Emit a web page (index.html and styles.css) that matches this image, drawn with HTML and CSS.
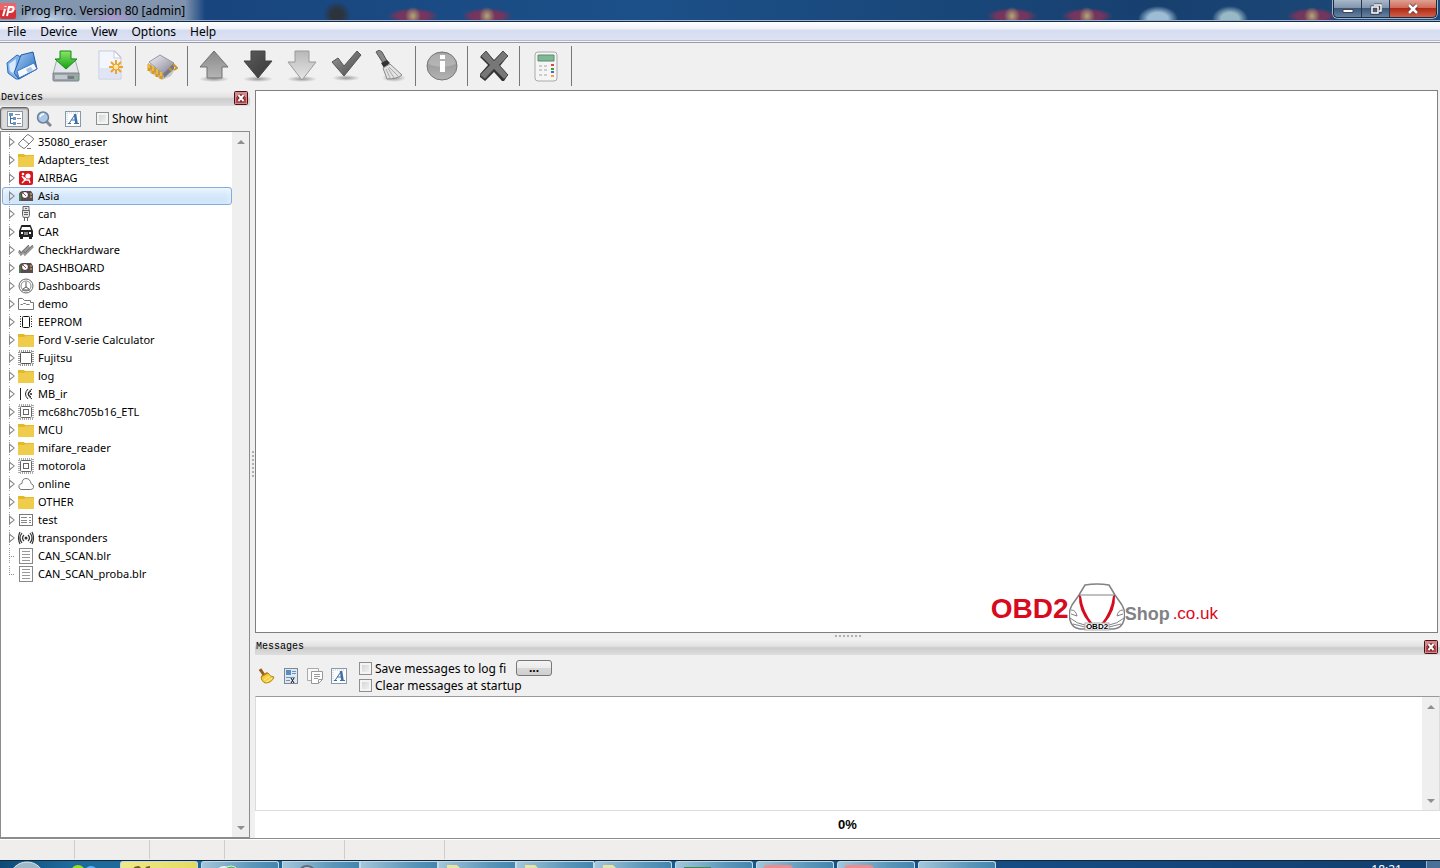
FILE: index.html
```html
<!DOCTYPE html>
<html lang="en">
<head>
    <meta charset="utf-8">
    <title>iProg Pro. Version 80 [admin]</title>
    <link rel="stylesheet" href="styles.css">
</head>
<body>
    <!-- shared icons -->
    <svg class="sprite" aria-hidden="true">
        <defs>
            <linearGradient id="gBlue" x1="0" y1="0" x2="1" y2="1"><stop offset="0" stop-color="#a8d2f8"/><stop offset="1" stop-color="#1a5fb8"/></linearGradient>
            <linearGradient id="gGray" x1="0" y1="0" x2="0" y2="1"><stop offset="0" stop-color="#8a8a8a"/><stop offset="1" stop-color="#b4b4b4"/></linearGradient>
            <linearGradient id="gDark" x1="0" y1="0" x2="1" y2="1"><stop offset="0" stop-color="#5c5c5c"/><stop offset="1" stop-color="#383838"/></linearGradient>
            <linearGradient id="gCheck" x1="0" y1="0" x2="1" y2="1"><stop offset="0" stop-color="#999"/><stop offset="1" stop-color="#4a4a4a"/></linearGradient>
            <linearGradient id="gLight" x1="0" y1="0" x2="0" y2="1"><stop offset="0" stop-color="#b8b8b8"/><stop offset="1" stop-color="#e6e6e6"/></linearGradient>
            <linearGradient id="gGreen" x1="0" y1="0" x2="0" y2="1"><stop offset="0" stop-color="#8be66a"/><stop offset="1" stop-color="#12a012"/></linearGradient>
            <linearGradient id="gMetal" x1="0" y1="0" x2="1" y2="1"><stop offset="0" stop-color="#f4f4fa"/><stop offset="1" stop-color="#80808f"/></linearGradient>
            <radialGradient id="gShadow"><stop offset="0" stop-color="#999"/><stop offset="1" stop-color="#999" stop-opacity="0"/></radialGradient>
        </defs>
        <symbol id="i-folder" viewBox="0 0 16 16"><path d="M0 2h6l1 1h9v12H0z" fill="#e3b92c"/><path d="M0 5h6l2-1h8v11H0z" fill="#efcc4b"/></symbol>
        <symbol id="i-eraser" viewBox="0 0 16 16"><path d="m1 9 8-8q1-1 2 0l4 3q1 1 0 2l-8 8q-1 1-2 0l-4-3q-1-1 0-2zM5 5l6 5M9 14.500h4" fill="#fff" stroke="#777"/></symbol>
        <symbol id="i-airbag" viewBox="0 0 16 16"><rect x="1" y="1" width="14" height="14" rx="2" fill="#d8161c"/><circle cx="10" cy="6" r="2.6" fill="#fff"/><circle cx="5" cy="4" r="1.3" fill="#fff"/><path d="m4 6 3 4-3 3M7 10l4 0 1 3M5 7l3 2" fill="none" stroke="#fff" stroke-width="1.4"/></symbol>
        <symbol id="i-dash" viewBox="0 0 16 16"><path d="M1 13V6q1-3 4-3h8l2 3v7z" fill="#5a4b50"/><path d="M1 13V7l2-2v8z" fill="#4a7a4c"/><circle cx="7" cy="7" r="3.5" fill="#fff" stroke="#333"/><path d="m5 5 3 3" stroke="#c33"/><path d="M12 6h2M12 9h2" stroke="#e6c44b"/></symbol>
        <symbol id="i-plug" viewBox="0 0 16 16"><path d="M5 .5h6v4H5zM4.500 4.500h7v5l-1 2h-5l-1-2zM6.500 12v3M9.500 12v3M6 6.500h4M6 8.500h4M7 2.500h2" fill="#e4e4e4" stroke="#666"/></symbol>
        <symbol id="i-car" viewBox="0 0 16 16"><path d="M1 7 3 2q0-1 1-1h8q1 0 1 1l2 5v6h-1v2h-3v-2H5v2H2v-2H1z" fill="#222"/><path d="m4 3-1 3h10l-1-3zM3 8h2v2H3zM11 8h2v2h-2z" fill="#fff"/><path d="M6 8h4v3H6z" fill="#888"/></symbol>
        <symbol id="i-checks" viewBox="0 0 16 16"><path d="m1 9 2 3 8-8M5 9l2 3 8-8" fill="none" stroke="#999" stroke-width="3"/><path d="m1 8 2 3 8-8M5 8l2 3 8-8" fill="none" stroke="#777"/></symbol>
        <symbol id="i-gauge" viewBox="0 0 16 16"><circle cx="8" cy="8" r="7" fill="#fff" stroke="#666"/><circle cx="8" cy="8" r="5" fill="none" stroke="#888"/><path d="M8 4v5l-3 2M8 9l3 2M4 12h8" fill="none" stroke="#555"/></symbol>
        <symbol id="i-open" viewBox="0 0 16 16"><path d="M.5 13.500v-11h4l2 2h6v2h3v7zM2.500 8.500h2l1-1h2l1 1h3" fill="#fff" stroke="#777"/></symbol>
        <symbol id="i-eeprom" viewBox="0 0 16 16"><rect x="4.500" y="2.500" width="7" height="11" rx="1" fill="#fff" stroke="#111"/><path d="M2.500 2v12M13.500 2v12" stroke="#111" stroke-dasharray="1 1.500"/></symbol>
        <symbol id="i-chip" viewBox="0 0 16 16"><rect x="1" y="1" width="14" height="14" fill="none" stroke="#999" stroke-width="2" stroke-dasharray="1 1"/><rect x="2.500" y="2.500" width="11" height="11" rx="1" fill="#fff" stroke="#555"/></symbol>
        <symbol id="i-cpu" viewBox="0 0 16 16"><rect x="1" y="1" width="14" height="14" fill="none" stroke="#aaa" stroke-width="2" stroke-dasharray="1 1"/><rect x="2.500" y="2.500" width="11" height="11" rx="1" fill="#fff" stroke="#666"/><rect x="5.500" y="5.500" width="5" height="5" fill="#fff" stroke="#666"/></symbol>
        <symbol id="i-ir" viewBox="0 0 16 16"><path d="M2.500 2v12M14 3q-8 5 0 10M13 5q-5 3 0 6M10 3q-5 5 0 10" fill="none" stroke="#222"/><circle cx="13" cy="8" r="1" fill="#222"/></symbol>
        <symbol id="i-cloud" viewBox="0 0 16 16"><path d="M3 13.500q-3-1-2-4 1-2 3-2 0-5 4-5t5 5q3 1 2.500 4-.5 2-3 2z" fill="#fff" stroke="#777"/></symbol>
        <symbol id="i-test" viewBox="0 0 16 16"><rect x="1.500" y="2.500" width="13" height="11" fill="#fff" stroke="#777"/><path d="M3 5.500h6M3 8.500h6M3 10.500h6M11 5.500h2M11 8.500h2M11 10.500h2" stroke="#888"/></symbol>
        <symbol id="i-radio" viewBox="0 0 16 16"><circle cx="8" cy="8" r="1.500" fill="#333"/><path d="M6 5q-3 3 0 6M10 5q3 3 0 6M4 3q-4 5 0 10M12 3q4 5 0 10M2 2q-3 6 0 12M14 2q3 6 0 12" fill="none" stroke="#333" stroke-width="1.200"/></symbol>
        <symbol id="i-doc" viewBox="0 0 16 16"><rect x="1.500" y=".5" width="13" height="15" fill="#fff" stroke="#888"/><path d="M4 3.500h8M4 6.500h8M4 9.500h8M4 12.500h8" stroke="#999"/></symbol>
        <symbol id="i-font" viewBox="0 0 16 16"><rect x=".5" y=".5" width="15" height="15" fill="#fff" stroke="#8a98a8"/><path d="M2 2v12M2 2h12" stroke="#bcd" stroke-dasharray="1 1"/><path d="m4 12.500 6-9M6.500 9H11M3 12.500h3M9 12.500h5" fill="none" stroke="#3c6ea8"/><path d="m10 3 1.500 9.500" stroke="#3c6ea8" stroke-width="2.500"/></symbol>
        <symbol id="i-x" viewBox="0 0 14 14"><rect x=".5" y=".5" width="13" height="13" rx="1" fill="#d58a8c" stroke="#4a1216"/><path d="M2 6h10v6H2z" fill="#b0484e"/><path d="m4.500 4 5 6M9.500 4l-5 6" stroke="#6a1c20" stroke-width="4"/><path d="m4.500 4 5 6M9.500 4l-5 6" stroke="#fff" stroke-width="2"/></symbol>
    </svg>

    <header class="titlebar">
        <svg class="app-icon" viewBox="0 0 16 16"><rect width="16" height="16" rx="2" fill="#d62f35"/><path d="M0 0h16v7H0z" fill="#e8666a"/><path d="M3 13 5 6M5.500 4V3M7 13 9 4h3q2 0 1.500 2.500T10 9H8" fill="none" stroke="#fff" stroke-width="2"/></svg>
        <h1>iProg Pro. Version 80 [admin]</h1>
        <div class="window-buttons">
            <button type="button" aria-label="Minimize"><svg viewBox="0 0 12 12"><path d="M1 6.500h10v3H1z" fill="#fff" stroke="#445"/></svg></button>
            <button type="button" aria-label="Restore"><svg viewBox="0 0 12 12"><path d="M4 2h7v7H9M2 4h6v7H2z" fill="none" stroke="#445" stroke-width="3"/><path d="M4 2h7v6H9M2 4h6v6H2z" fill="none" stroke="#fff" stroke-width="1.500"/></svg></button>
            <button type="button" class="close" aria-label="Close"><svg viewBox="0 0 12 12"><path d="m2 2 8 8M10 2l-8 8" stroke="#633" stroke-width="4"/><path d="m2 2 8 8M10 2l-8 8" stroke="#fff" stroke-width="2.500"/></svg></button>
        </div>
    </header>

    <nav class="menubar">
        <button type="button">File</button>
        <button type="button">Device</button>
        <button type="button">View</button>
        <button type="button">Options</button>
        <button type="button">Help</button>
    </nav>

    <div class="toolbar">
        <button type="button" aria-label="Open"><svg viewBox="0 0 32 32"><path d="m1 13 10-8 6 3-4 21-3 0-8-6z" fill="#7fb4ea" stroke="#2c6cb8"/><path d="m3 14 7-5-1 16-5-4z" fill="#d8eafc"/><path d="m15 5 12-3 4 17-18 10-5-6z" fill="url(#gBlue)" stroke="#2058a8"/><path d="m11 21 17-8 3 6-18 9z" fill="#f5f9ff" stroke="#3a78c4"/><path d="m20 19 5-2 2 3-5 3z" fill="#a9c4e4"/></svg></button>
        <button type="button" aria-label="Save"><svg viewBox="0 0 32 32"><path d="M7 9h18l4 15H3z" fill="#e4e7ea" stroke="#a5a9ae"/><path d="M3 23h26v7q0 1-1 1H4q-1 0-1-1z" fill="#9aa3aa" stroke="#7d848a"/><path d="M5 25h12v4H5z" fill="#c2cad0"/><path d="M19 26v3M21 26v3M23 26v3" stroke="#555"/><circle cx="26" cy="28" r="1" fill="#4e4"/><path d="M10 1h11v8h6L16 19 5 9h5z" fill="url(#gGreen)" stroke="#158a18"/></svg></button>
        <button type="button" aria-label="New"><svg viewBox="0 0 32 32"><path d="M5 1h16l6 6v22H5z" fill="#f3f6fc" stroke="#c5cbdc"/><path d="M6 18h20v10H6z" fill="#dfe5f4"/><path d="M20 1v7h7z" fill="#fff" stroke="#c5cbdc"/><path d="M22 10v14M15 17h14M17 12l10 10M27 12 17 22" stroke="#f0a32a" stroke-width="2"/><circle cx="22" cy="17" r="3" fill="#ffe9a8" stroke="#eaa030"/></svg></button>
        <span class="sep"></span>
        <button type="button" aria-label="Chip"><svg viewBox="0 0 32 32"><path d="m3 17 12 9 14-7-4 7-9 4-13-8z" fill="#c7c7c7"/><path d="m3 12 11-7 14 8-11 11z" fill="url(#gMetal)" stroke="#9797a7"/><path d="m17 24 11-11v6l-10 9z" fill="#77778a"/><path d="m2 13 15 10v5L2 18z" fill="#a89c90"/><path d="M3 14v7M7 16v8M11 19v8M15 22v7" stroke="#dc9a14" stroke-width="3"/><path d="M3 14v4M7 16v5M11 19v5M15 22v4" stroke="#ffd766" stroke-width="1"/><path d="m27 14 4 4-3 2M23 18l3 3" fill="none" stroke="#c8932c" stroke-width="2"/></svg></button>
        <span class="sep"></span>
        <button type="button" aria-label="Read"><svg viewBox="0 0 32 32"><ellipse cx="16" cy="29" rx="15" ry="3" fill="url(#gShadow)"/><path d="m16 1 14 16h-6v11H9V17H2z" fill="url(#gGray)" stroke="#707070"/></svg></button>
        <button type="button" aria-label="Write"><svg viewBox="0 0 32 32"><ellipse cx="16" cy="29" rx="15" ry="3" fill="url(#gShadow)"/><path d="M9 1h14v10h7L16 28 2 11h7z" fill="url(#gDark)" stroke="#444"/></svg></button>
        <button type="button" aria-label="Program"><svg viewBox="0 0 32 32"><ellipse cx="16" cy="29" rx="15" ry="3" fill="url(#gShadow)"/><path d="M9 1h14v11h7L16 30 2 12h7z" fill="url(#gLight)" stroke="#9a9a9a"/></svg></button>
        <button type="button" aria-label="Verify"><svg viewBox="0 0 32 32"><ellipse cx="16" cy="28" rx="14" ry="3" fill="url(#gShadow)"/><path d="m2 12 6-4 6 8L27 1l4 4-17 21z" fill="url(#gCheck)" stroke="#555"/></svg></button>
        <button type="button" aria-label="Erase"><svg viewBox="0 0 32 32"><ellipse cx="20" cy="28" rx="12" ry="4" fill="url(#gShadow)"/><path d="m2 2 3-2 3 2 5 9-4 2z" fill="#888" stroke="#555"/><path d="m7 13 6-3 3 3-6 5z" fill="#333"/><path d="m9 18 7-4 12 11q-5 4-15 4z" fill="#e2e2e2" stroke="#888"/><path d="m12 19 4 9M14 18l6 10M15 17l9 9" stroke="#aaa"/></svg></button>
        <span class="sep"></span>
        <button type="button" aria-label="Information"><svg viewBox="0 0 32 32"><ellipse cx="16" cy="16" rx="15" ry="14" fill="url(#gGray)" stroke="#777"/><path d="M2 14q2-11 14-11t14 11q-14 6-28 0" fill="#ccc" fill-opacity=".5"/><path d="M14 5h5v4h-5zM14 11h5v11h-5z" fill="#fff"/></svg></button>
        <span class="sep"></span>
        <button type="button" aria-label="Stop"><svg viewBox="0 0 32 32"><path d="m2 7 6-6 8 9 9-9 5 5-8 10 8 9-4 6h-2l-8-9-9 9-5-4v-3l8-9-8-8z" fill="#333"/><path d="m3 6 5-5 8 10 9-10 5 5-9 9 9 10-4 4-10-10-9 10-5-4 10-10z" fill="#777" stroke="#4d4d4d"/></svg></button>
        <span class="sep"></span>
        <button type="button" aria-label="Calculator"><svg viewBox="0 0 32 32"><rect x="5" y="2" width="22" height="29" rx="3" fill="#f5f5f5" stroke="#aaa"/><path d="M8 5h16v6H8z" fill="#7fb897" stroke="#5a8c70"/><path d="M9 15h3v2H9zM14 15h3v2h-3zM9 19h3v2H9zM14 19h3v2h-3zM9 24h3v2H9zM14 24h3v2h-3z" fill="#ccc"/><path d="M21 14h3v2h-3z" fill="#d44"/><path d="M21 18h3v2h-3z" fill="#3a3"/><path d="M21 21h3v2h-3z" fill="#46c"/><path d="M21 25h3v2h-3z" fill="#ea3"/></svg></button>
        <span class="sep"></span>
    </div>

    <main class="workspace">
        <section class="devices">
            <div class="panel-head">
                <h2>Devices</h2>
                <button type="button" aria-label="Close devices"><svg><use href="#i-x"/></svg></button>
            </div>
            <div class="device-tools">
                <button type="button" class="pressed" aria-label="Tree view"><svg viewBox="0 0 16 16"><rect x=".5" y=".5" width="15" height="15" fill="#fff" stroke="#8a98a8"/><path d="M3.500 3v9.500H7M3.500 7.500H7" fill="none" stroke="#3c6ea8"/><path d="M2 2h4v3H2zM6 6h3v3H6zM6 11h3v3H6z" fill="#6c94bc"/><path d="M8 3.500h5M10 7.500h4M10 12.500h4" stroke="#88a"/></svg></button>
                <button type="button" aria-label="Find"><svg viewBox="0 0 16 16"><path d="m10 10 5 5" stroke="#888" stroke-width="3"/><circle cx="7" cy="6.500" r="5.500" fill="#a9c8ea" stroke="#6d8198" stroke-width="1.500"/><path d="M4 6q1-3 4-3" fill="none" stroke="#fff" stroke-width="1.500"/></svg></button>
                <button type="button" aria-label="Font"><svg><use href="#i-font"/></svg></button>
                <label><input type="checkbox"> Show hint</label>
            </div>
            <div class="tree-box">
                <ul class="tree">
                    <li><button type="button"><svg><use href="#i-eraser"/></svg>35080_eraser</button></li>
                    <li><button type="button"><svg><use href="#i-folder"/></svg>Adapters_test</button></li>
                    <li><button type="button"><svg><use href="#i-airbag"/></svg>AIRBAG</button></li>
                    <li class="selected"><button type="button"><svg><use href="#i-dash"/></svg>Asia</button></li>
                    <li><button type="button"><svg><use href="#i-plug"/></svg>can</button></li>
                    <li><button type="button"><svg><use href="#i-car"/></svg>CAR</button></li>
                    <li><button type="button"><svg><use href="#i-checks"/></svg>CheckHardware</button></li>
                    <li><button type="button"><svg><use href="#i-dash"/></svg>DASHBOARD</button></li>
                    <li><button type="button"><svg><use href="#i-gauge"/></svg>Dashboards</button></li>
                    <li><button type="button"><svg><use href="#i-open"/></svg>demo</button></li>
                    <li><button type="button"><svg><use href="#i-eeprom"/></svg>EEPROM</button></li>
                    <li><button type="button"><svg><use href="#i-folder"/></svg>Ford V-serie Calculator</button></li>
                    <li><button type="button"><svg><use href="#i-chip"/></svg>Fujitsu</button></li>
                    <li><button type="button"><svg><use href="#i-folder"/></svg>log</button></li>
                    <li><button type="button"><svg><use href="#i-ir"/></svg>MB_ir</button></li>
                    <li><button type="button"><svg><use href="#i-cpu"/></svg>mc68hc705b16_ETL</button></li>
                    <li><button type="button"><svg><use href="#i-folder"/></svg>MCU</button></li>
                    <li><button type="button"><svg><use href="#i-folder"/></svg>mifare_reader</button></li>
                    <li><button type="button"><svg><use href="#i-cpu"/></svg>motorola</button></li>
                    <li><button type="button"><svg><use href="#i-cloud"/></svg>online</button></li>
                    <li><button type="button"><svg><use href="#i-folder"/></svg>OTHER</button></li>
                    <li><button type="button"><svg><use href="#i-test"/></svg>test</button></li>
                    <li><button type="button"><svg><use href="#i-radio"/></svg>transponders</button></li>
                    <li class="file"><button type="button"><svg><use href="#i-doc"/></svg>CAN_SCAN.blr</button></li>
                    <li class="file"><button type="button"><svg><use href="#i-doc"/></svg>CAN_SCAN_proba.blr</button></li>
                </ul>
                <div class="scrollbar">
                    <button type="button" class="up" aria-label="Scroll up"></button>
                    <button type="button" class="down" aria-label="Scroll down"></button>
                </div>
            </div>
        </section>

        <div class="splitter vertical"></div>

        <div class="right">
            <section class="canvas">
                <div class="logo">
                    <span class="obd">OBD2</span>
                    <svg viewBox="0 0 56 48"><path d="m10 12 6-10q12-2 24 0l6 10 7 10q4 7 2 15-2 8-10 9H11q-8-1-10-9-2-8 2-15z" fill="#fff" stroke="#808285" stroke-width="1.500"/><path d="M10 12h36M1 35q7 6 15 7M55 35q-7 6-15 7M2 27q5 0 6 6l-6-2M54 27q-5 0-6 6l6-2M16 44 4 41M40 44l12-3" fill="none" stroke="#808285"/><path d="M10 12q-1 16 11 29h3Q14 29 12 13zM46 12q1 16-11 29h-3Q42 29 44 13z" fill="#d70a1e"/><rect x="16" y="40" width="24" height="7" fill="#fff" stroke="#aaa"/><text x="28" y="46" text-anchor="middle">OBD2</text></svg>
                    <span class="shop">Shop</span>
                    <span class="uk">.co.uk</span>
                </div>
            </section>
            <div class="splitter horizontal"></div>
            <section class="messages">
                <div class="panel-head">
                    <h2>Messages</h2>
                    <button type="button" aria-label="Close messages"><svg><use href="#i-x"/></svg></button>
                </div>
                <div class="message-tools">
                    <button type="button" aria-label="Clear"><svg viewBox="0 0 16 16"><path d="m1 1 4 6" stroke="#9a5c20" stroke-width="3"/><path d="m2 8 6-4 2 2-7 4z" fill="#b8742a"/><path d="m2 9 7-4q2 4 6 4-2 6-9 6-4-2-4-6" fill="#f5cf35" stroke="#b48818"/><path d="m5 12 6-4M7 14l6-4" stroke="#fff0a0"/></svg></button>
                    <button type="button" aria-label="Save log"><svg viewBox="0 0 16 16"><rect x="1.500" y=".5" width="13" height="15" fill="#dfe8f2" stroke="#7d8894"/><path d="M3 2h5v5H3z" fill="#5b8cc0"/><path d="M9 3.500h4M9 5.500h4M3 9.500h9M3 12.500h4" stroke="#6e93bb"/><path d="m8 10 3 5M11 10l-3 5" stroke="#111"/></svg></button>
                    <button type="button" aria-label="Copy"><svg viewBox="0 0 16 16"><path d="M.5.5h11v12H.5z" fill="#f8f8f8" stroke="#aaa"/><path d="M4.500 3.500h11v8l-4 4h-7z" fill="#fff" stroke="#999"/><path d="M7 6.500h6M7 8.500h6M7 10.500h4M11.500 15v-3.500H15" fill="none" stroke="#999"/></svg></button>
                    <button type="button" aria-label="Font"><svg><use href="#i-font"/></svg></button>
                    <div class="options">
                        <div class="option">
                            <label class="log-label"><input type="checkbox"> Save messages to log fi</label>
                            <button type="button" class="browse">...</button>
                        </div>
                        <div class="option"><label><input type="checkbox"> Clear messages at startup</label></div>
                    </div>
                </div>
                <div class="log-box">
                    <textarea readonly aria-label="Messages"></textarea>
                    <div class="scrollbar">
                        <button type="button" class="up" aria-label="Scroll up"></button>
                        <button type="button" class="down" aria-label="Scroll down"></button>
                    </div>
                </div>
                <div class="progress">0%</div>
            </section>
        </div>
    </main>

    <footer class="statusbar">
        <span></span><span></span><span></span><span class="wide"></span><span class="medium"></span>
    </footer>

    <div class="taskbar">
        <div class="start"><svg viewBox="0 0 120 8"><ellipse cx="27" cy="17" rx="17" ry="16" fill="#9fb8c8" stroke="#dfe9ef"/><circle cx="78" cy="11" r="7" fill="#9fe01c"/><circle cx="91" cy="12" r="7" fill="#5cb4f0"/></svg></div>
        <button type="button" class="task active" aria-label="Files"><svg viewBox="0 0 40 8"><path d="M12 8q0-4 6-4l4 4M24 5l5-1v4" fill="#6d5b22"/></svg></button>
        <button type="button" class="task" aria-label="Browser"><svg viewBox="0 0 40 8"><circle cx="22" cy="12" r="8" fill="#e9f3ee"/><circle cx="29" cy="12" r="8" fill="#5cb85c" stroke="#dff0df"/></svg></button>
        <button type="button" class="task group" aria-label="Search"><svg viewBox="0 0 40 8"><circle cx="24" cy="13" r="9" fill="#b9cfdd" stroke="#667" stroke-width="2"/></svg></button>
        <button type="button" class="task group" aria-label="Window"></button>
        <button type="button" class="task group" aria-label="Folder"><svg viewBox="0 0 40 8"><path d="M8 3h10l3 3h6v2H8z" fill="#e8e4a4"/></svg></button>
        <button type="button" class="task group" aria-label="Folder"><svg viewBox="0 0 40 8"><path d="M8 3h10l3 3h6v2H8z" fill="#e8e4a4"/></svg></button>
        <button type="button" class="task" aria-label="Folder"><svg viewBox="0 0 40 8"><path d="M8 3h10l3 3h6v2H8z" fill="#e8e4a4"/></svg></button>
        <button type="button" class="task" aria-label="Sheet"><svg viewBox="0 0 40 8"><path d="M8 5h27v3H8z" fill="#3c8a4c"/></svg></button>
        <button type="button" class="task" aria-label="Tool"><svg viewBox="0 0 40 8"><path d="M6 8q0-5 5-5h20q5 0 5 5z" fill="#f08c8c"/></svg></button>
        <button type="button" class="task" aria-label="Tool"><svg viewBox="0 0 40 8"><path d="M6 8q0-5 5-5h20q5 0 5 5z" fill="#f08c8c"/></svg></button>
        <button type="button" class="task" aria-label="Window"></button>
        <time class="clock">18:21</time>
        <button type="button" class="show-desktop" aria-label="Show desktop"></button>
    </div>
</body>
</html>
```
FILE: styles.css
```css
* {
    box-sizing: border-box;
}
body {
    margin: 0;
    height: 100vh;
    display: flex;
    flex-direction: column;
    overflow: hidden;
    background-color: #f0f0f0;
    color: #000;
    font-family: "Noto Sans", "Open Sans", sans-serif;
    font-size: 12px;
}
button {
    margin: 0;
    padding: 0;
    border: none;
    background: none;
    color: inherit;
    font: inherit;
}
svg {
    display: block;
    flex: none;
}
h1, h2 {
    margin: 0;
    font-weight: normal;
}
.sprite {
    width: 0;
    height: 0;
    position: absolute;
}

/* title bar */
.titlebar {
    flex: none;
    display: flex;
    align-items: flex-start;
    height: 22px;
    border-bottom: 1px solid #14294a;
    box-shadow: inset 0 -1px #9db4cf;
    background:
        radial-gradient(ellipse 14px 14px at 337px 15px, #2c333c 40%, transparent),
        radial-gradient(ellipse 8px 9px at 413px 16px, #b0a878, transparent),
        radial-gradient(ellipse 26px 8px at 413px 16px, #74355e 60%, transparent),
        radial-gradient(ellipse 8px 9px at 487px 16px, #b0a878, transparent),
        radial-gradient(ellipse 26px 8px at 487px 16px, #74355e 60%, transparent),
        radial-gradient(ellipse 8px 9px at 1012px 16px, #b0a878, transparent),
        radial-gradient(ellipse 26px 8px at 1012px 16px, #74355e 60%, transparent),
        radial-gradient(ellipse 8px 9px at 1087px 16px, #b0a878, transparent),
        radial-gradient(ellipse 26px 8px at 1087px 16px, #74355e 60%, transparent),
        radial-gradient(ellipse 20px 13px at 1158px 19px, #9cbdd4 50%, transparent),
        radial-gradient(ellipse 18px 13px at 1230px 19px, #98b8c6 50%, transparent),
        radial-gradient(ellipse 8px 9px at 1312px 16px, #b0a878, transparent),
        radial-gradient(ellipse 26px 8px at 1312px 16px, #74355e 60%, transparent),
        radial-gradient(ellipse 30px 12px at 112px 20px, #b49cd0, transparent),
        radial-gradient(ellipse 34px 12px at 48px 20px, #c8d8ec, transparent),
        linear-gradient(90deg, #8499b0, #7f93ae 185px, transparent 205px),
        linear-gradient(90deg, #17407a, #1c5088 45%, #17406f 80%, #1d4a7a);
}
.app-icon {
    width: 16px;
    height: 16px;
    margin-top: 3px;
}
.titlebar h1 {
    margin-left: 5px;
    font-size: 12px;
    line-height: 22px;
}
.window-buttons {
    display: flex;
    margin-left: auto;
    margin-right: 3px;
    border: 1px solid #1c2c40;
    border-top: none;
    border-radius: 0 0 5px 5px;
    box-shadow: 0 0 0 1px #9fb2c8;
    overflow: hidden;
}
.window-buttons button {
    display: flex;
    align-items: center;
    justify-content: center;
    width: 28px;
    height: 17px;
    border-right: 1px solid #26384e;
    background: linear-gradient(#a9b8c9, #8095ad 45%, #3d5878 50%, #6683a3);
}
.window-buttons .close {
    width: 46px;
    border-right: none;
    background: linear-gradient(#dfa093, #cf6c5a 45%, #b02a14 50%, #d0604a);
}
.window-buttons svg {
    width: 12px;
    height: 12px;
}

/* menu */
.menubar {
    flex: none;
    display: flex;
    height: 21px;
    padding-left: 7px;
    gap: 14px;
    border-bottom: 1px solid #9a9aa6;
    box-shadow: inset 0 -1px #f5f5f8, inset 0 -2px #b4b8c8;
    background: linear-gradient(#fff, #eef1f8 7px, #d5dcf0 8px, #dfe4f5);
}
.menubar button {
    line-height: 18px;
    height: 19px;
}

/* main toolbar */
.toolbar {
    flex: none;
    display: flex;
    align-items: center;
    height: 47px;
    padding-bottom: 2px;
}
.toolbar button {
    display: flex;
    justify-content: center;
    width: 44px;
}
.toolbar svg {
    width: 32px;
    height: 32px;
}
.sep {
    width: 1px;
    height: 40px;
    margin: 0 4px 0 3px;
    background-color: #777;
}

.workspace {
    flex: 1;
    min-height: 0;
    display: flex;
}
.panel-head {
    flex: none;
    display: flex;
    align-items: center;
    justify-content: space-between;
    height: 16px;
    padding: 0 2px 1px 1px;
    background: linear-gradient(#f2f2f2, #e2e2e2 45%, #cdcdcd 55%, #dedede);
}
.panel-head h2 {
    font-family: "Liberation Mono", monospace;
    font-size: 10px;
    line-height: 14px;
}
.panel-head svg {
    width: 14px;
    height: 14px;
}
label {
    display: flex;
    align-items: center;
    gap: 3px;
    white-space: nowrap;
}
input[type="checkbox"] {
    flex: none;
    appearance: none;
    width: 13px;
    height: 13px;
    margin: 0;
    border: 1px solid #8e8f8f;
    background: linear-gradient(135deg, #cdd0d3, #f6f6f6);
    box-shadow: inset 0 0 0 2px #f4f4f4;
}

/* devices panel */
.devices {
    flex: none;
    display: flex;
    flex-direction: column;
    width: 250px;
}
.device-tools {
    flex: none;
    display: flex;
    align-items: center;
    height: 25px;
}
.device-tools button {
    display: flex;
    align-items: center;
    justify-content: center;
    width: 29px;
    height: 23px;
}
.device-tools .pressed {
    border: 1px solid #666;
    border-radius: 3px;
    background-color: #dcdcdc;
    box-shadow: inset 0 1px 2px #888;
}
.device-tools svg,
.message-tools svg {
    width: 16px;
    height: 16px;
}
.device-tools label {
    margin-left: 9px;
}
.tree-box {
    flex: 1;
    min-height: 0;
    display: flex;
    border: 1px solid #8c8c8c;
    background-color: #fff;
}
.tree {
    flex: 1;
    margin: 0;
    padding: 1px 0 0 1px;
    list-style: none;
    font-size: 11px;
}
.tree li {
    display: flex;
    align-items: center;
    height: 18px;
    padding-left: 6px;
    border: 1px solid transparent;
    border-radius: 3px;
    background: repeating-linear-gradient(#999 0 1px, transparent 1px 2px) 6px 0 / 1px 100% no-repeat;
}
.tree li::before {
    content: "";
    width: 6px;
    height: 10px;
    margin-right: 3px;
    background-color: #888;
    clip-path: polygon(0 0, 100% 50%, 0 100%, 0 0, 17% 24%, 17% 76%, 76% 50%, 17% 24%);
}
.tree li.file::before {
    height: 1px;
    background: repeating-linear-gradient(90deg, #888 0 1px, transparent 1px 2px);
    clip-path: none;
}
.tree li:last-child {
    background-size: 1px 50%;
}
.tree li.selected {
    border-color: #84acdd;
    background-color: #d2e6fa;
    box-shadow: inset 0 4px 6px #eef6fe;
}
.tree button {
    display: flex;
    align-items: center;
    gap: 4px;
    line-height: 16px;
}
.tree svg {
    width: 16px;
    height: 16px;
}
.scrollbar {
    flex: none;
    display: flex;
    flex-direction: column;
    justify-content: space-between;
    width: 17px;
    padding: 1px 0;
    background-color: #efefef;
}
.scrollbar button {
    height: 17px;
    display: flex;
    align-items: center;
    justify-content: center;
}
.scrollbar button::before {
    content: "";
    border: 4px solid transparent;
    border-top-width: 0;
    border-bottom-color: #909090;
}
.scrollbar .down::before {
    border-top: 4px solid #909090;
    border-bottom-width: 0;
}

/* splitters */
.splitter {
    flex: none;
    display: flex;
    align-items: center;
    justify-content: center;
}
.vertical {
    width: 5px;
}
.horizontal {
    height: 6px;
}
.splitter::before {
    content: "";
    background-image: radial-gradient(circle, #b0b0b0 1px, transparent 1px);
    background-size: 4px 4px;
}
.vertical::before {
    width: 4px;
    height: 28px;
}
.horizontal::before {
    width: 28px;
    height: 4px;
}

.right {
    flex: 1;
    min-width: 0;
    display: flex;
    flex-direction: column;
}
.canvas {
    flex: 1;
    display: flex;
    align-items: flex-end;
    justify-content: flex-end;
    margin-right: 2px;
    padding-right: 219px;
    border: 1px solid #7f7f7f;
    background-color: #fff;
}
.logo {
    display: flex;
    align-items: center;
    padding-bottom: 1px;
    font-family: "Liberation Sans", Arial, sans-serif;
    font-size: 17px;
}
.logo svg {
    width: 56px;
    height: 48px;
}
.logo text {
    font-size: 8px;
    font-weight: bold;
}
.obd {
    color: #d70a1e;
    font-size: 28px;
    font-weight: bold;
    padding-top: 4px;
}
.shop {
    color: #808285;
    font-size: 18px;
    font-weight: bold;
    padding-top: 14px;
}
.uk {
    color: #d70a1e;
    margin-left: 3px;
    padding-top: 14px;
}

/* messages panel */
.messages {
    flex: none;
    display: flex;
    flex-direction: column;
}
.message-tools {
    flex: none;
    display: flex;
    align-items: center;
    height: 41px;
}
.message-tools > button {
    display: flex;
    justify-content: center;
    width: 24px;
}
.options {
    margin-left: 8px;
    padding-top: 2px;
}
.option {
    display: flex;
    align-items: center;
    height: 17px;
}
.log-label {
    width: 155px;
}
.browse {
    width: 36px;
    height: 16px;
    margin-left: 2px;
    border: 1px solid #777;
    border-radius: 3px;
    background: linear-gradient(#f4f4f4, #ebebeb 50%, #d8d8d8 50%, #cfcfcf);
    font-weight: bold;
    line-height: 12px;
}
.log-box {
    display: flex;
    height: 115px;
    border: 1px solid #dcdcdc;
    border-top-color: #999;
    background-color: #fff;
}
.log-box textarea {
    flex: 1;
    border: none;
    outline: none;
    resize: none;
    background-color: #fff;
}
.progress {
    height: 27px;
    background-color: #fff;
    font-family: "Liberation Sans", Arial, sans-serif;
    font-size: 13px;
    font-weight: bold;
    line-height: 27px;
    text-align: center;
}

/* status bar */
.statusbar {
    flex: none;
    display: flex;
    height: 22px;
    border-top: 1px solid #8c8c8c;
    box-shadow: inset 0 1px #fff;
    background-color: #f0eded;
}
.statusbar span {
    width: 75px;
    margin: 1px 0;
    border-right: 1px solid #cfcccc;
}
.statusbar .wide {
    width: 120px;
}
.statusbar .medium {
    width: 100px;
}

/* taskbar, only its top edge is on screen */
.taskbar {
    flex: none;
    display: flex;
    height: 8px;
    overflow: hidden;
    border-top: 1px solid #10283c;
    background: linear-gradient(90deg, #0e4a78, #1d6b9c 70px, #1a6292 500px, #154c84 1000px, #123e70);
}
.start {
    width: 120px;
}
.start svg {
    width: 120px;
    height: 8px;
}
.task {
    width: 78px;
    height: 40px;
    margin-right: 3px;
    border: 1px solid #c3dbe8;
    border-bottom: none;
    border-radius: 3px 3px 0 0;
    background: linear-gradient(100deg, #a4c6da, #5c97ba 60%, #3f81ab);
}
.task svg {
    width: 40px;
    height: 8px;
}
.task {
    display: flex;
    align-items: flex-start;
}
.task.group {
    margin-right: 0;
    border-radius: 0;
}
.task.active {
    background: linear-gradient(100deg, #efe98a, #e2da5c);
}
.clock {
    margin-left: auto;
    padding: 2px 24px 0 0;
    color: #fff;
    line-height: 14px;
}
.show-desktop {
    width: 14px;
    height: 40px;
    border-left: 1px solid #9fb8d0;
    background-color: #4a7098;
}
```
